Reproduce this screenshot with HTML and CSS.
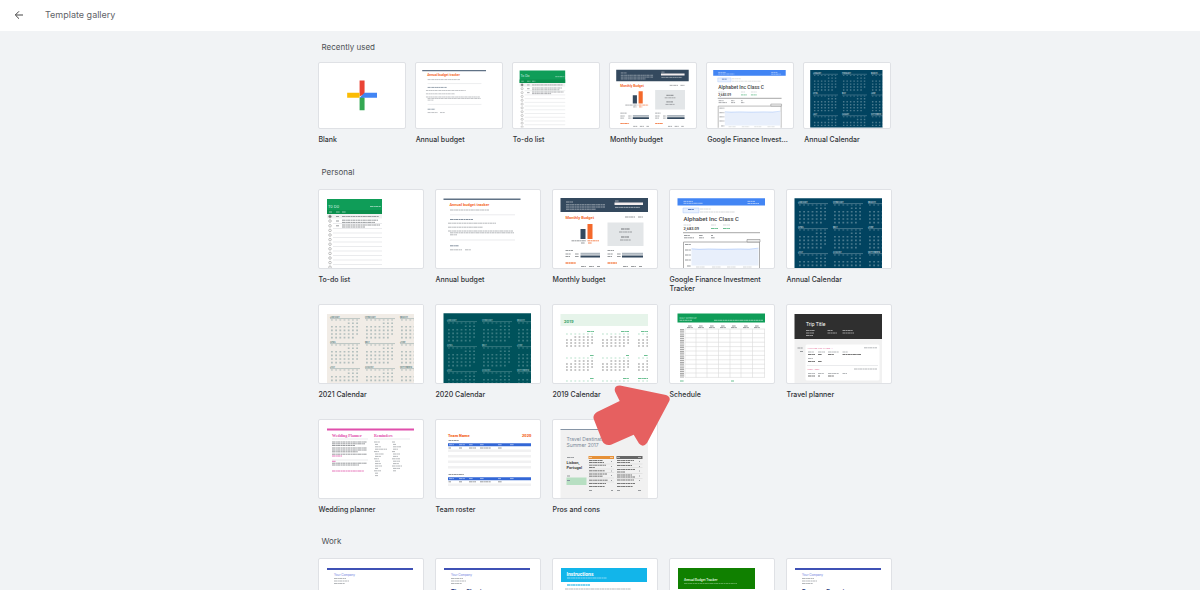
FILE: index.html
```html
<!DOCTYPE html>
<html lang="en">
<head>
<meta charset="utf-8">
<meta name="viewport" content="width=device-width, initial-scale=1">
<title>Template gallery</title>
<link rel="stylesheet" href="styles.css">
</head>
<body>
<svg class="defs" aria-hidden="true">
  <defs>
    <g id="month">
      <path class="rule" d="M0 2.6H30"/>
      <path class="day faint" d="M1 4H30"/>
      <path class="day" d="M17.8 7.2H30M1 10.8H30M1 14.4H30M1 18H30M1 21.6H26"/>
    </g>
    <g id="months">
      <use href="#month" x="12" y="12"/><use href="#month" x="47" y="12"/><use href="#month" x="82" y="12"/>
      <use href="#month" x="12" y="37"/><use href="#month" x="47" y="37"/><use href="#month" x="82" y="37"/>
      <use href="#month" x="12" y="62"/><use href="#month" x="47" y="62"/><use href="#month" x="82" y="62"/>
      <g class="names" fill="currentColor">
        <text x="12" y="14">JANUARY</text><text x="47" y="14">FEBRUARY</text><text x="82" y="14">MARCH</text>
        <text x="12" y="39">APRIL</text><text x="47" y="39">MAY</text><text x="82" y="39">JUNE</text>
        <text x="12" y="64">JULY</text><text x="47" y="64">AUGUST</text><text x="82" y="64">SEPTEMBER</text>
      </g>
      <path fill="#fff" d="M96 0H106V80H96Z"/>
    </g>
    <g id="days19">
      <path class="day green faint" d="M1 5H30"/>
      <path class="day gray" d="M9.400 8H30M1 11H30M1 14H30M1 17H26"/>
    </g>
    <g id="company">
      <path fill="#3f51b5" d="M9 10H95V12H9Z"/>
      <text class="t-company" x="16" y="18">Your Company</text>
      <path class="greek" d="M16 20.500H28M16 23H31M16 25.500H27"/>
    </g>
  </defs>

  <symbol id="todo" viewBox="1 1 104 78">
    <path fill="#0f9d58" d="M9 10H64V25H9Z"/><path fill="#0b8f4d" d="M9 21H64V25H9Z"/>
    <text class="t-todo" x="10" y="18.500">To Do</text>
    <path class="greek white" d="M52 17.500H63M11 23H14M18 23H22M24 23H28"/>
    <path fill="#f1f1f1" d="M9 25H64V29.500H9Z"/>
    <path class="greek dark" d="M24 27.500H61M18 27.500H21M18 32H21M24 31.200H60M24 33.400H57M18 36.800H21M24 36H62M24 38H47"/>
    <path class="thin" d="M15 34.500H64M15 39.500H64M15 44H64M15 48.500H64M15 53H64M15 57.500H64M15 62H64M15 66.500H64M15 71H64M15 75.500H64"/>
    <g class="ring"><circle cx="12" cy="27.500" r="1.300" fill="#777"/><circle cx="12" cy="32" r="1.300"/><circle cx="12" cy="36.800" r="1.300"/><circle cx="12" cy="41.400" r="1.300"/><circle cx="12" cy="46" r="1.300"/><circle cx="12" cy="50.600" r="1.300"/><circle cx="12" cy="55.200" r="1.300"/><circle cx="12" cy="59.800" r="1.300"/><circle cx="12" cy="64.400" r="1.300"/><circle cx="12" cy="69" r="1.300"/><circle cx="12" cy="73.600" r="1.300"/><circle cx="12" cy="78.200" r="1.300"/></g>
  </symbol>

  <symbol id="annual" viewBox="1 1 104 78">
    <path fill="#607286" d="M8.500 9.500H85.500V11H8.500Z"/>
    <text class="t-annual" x="14.500" y="17.200">Annual budget tracker</text>
    <path class="greek" d="M15 21H54"/>
    <path class="thin" d="M15 25.800H80M15 51H80"/>
    <path class="greek slate" d="M15 30.500H38M15 56.800H24"/>
    <path class="greek" d="M13 34.200H61M13 38.200H48M13 42H78M15 43.800H79M15 45.800H22M15 60.800H27M30 60.800H36"/>
  </symbol>

  <symbol id="monthly" viewBox="1 1 104 78">
    <path fill="#34495e" d="M8.500 9H96V23H8.500Z"/>
    <path fill="#f4eeee" d="M62.500 13.600H91V16H62.500Z"/>
    <path class="greek white" d="M14 13H21M14 15.800H53M14 18H53M14 20.200H44M63 12H67M63 18.400H88"/>
    <text class="t-monthly" x="13.500" y="30.400">Monthly Budget</text>
    <path class="greek dark" d="M73 28H83M86 28H91"/>
    <path fill="#34495e" d="M28.500 40H33.500V50H28.500Z"/>
    <path fill="#f4692b" d="M35.500 35H40.500V50H35.500Z"/>
    <path class="greek dark" d="M19.500 51.800H34M29 54H33"/>
    <path class="greek orange" d="M35.500 51.800H47M36 54H40"/>
    <path fill="#e3e6e8" d="M55.500 33.500H91.500V57H55.500Z"/>
    <path class="greek dark bold" d="M69 40H78M69 48H77"/><path class="greek dark" d="M67 43H80M68 51H79M13.500 61.500H21M55.500 61.500H62M13.500 65H19M23 65H27M13.500 67.500H18M23 67.500H27M55.500 65H61M65 65H69M55.500 67.500H60M65 67.500H69"/>
    <path fill="#adb6bf" d="M28.500 63.800H48V65.800H28.500ZM70 63.800H91V65.800H70Z"/>
    <path fill="#34495e" d="M28.500 66.500H48V68.500H28.500ZM70 66.500H91V68.500H70Z"/>
    <path class="greek orange bold" d="M13.500 74H24M55.500 74H65"/>
    <path class="greek dark" d="M29 77.500H34M37 77.500H42M45 77.500H48M71 77.500H76M79 77.500H84M87 77.500H90"/>
  </symbol>

  <symbol id="finance" viewBox="1 1 104 78">
    <path fill="#4285f4" d="M8.500 9.300H96V16.500H8.500Z"/>
    <path class="greek white" d="M14.500 12.400H24M14.500 14.300H34M78.500 12.400H86M78.500 14.500H90"/>
    <path fill="#e8f0fe" stroke="#a9c6fa" stroke-width=".5" d="M14 19H30V23.800H14Z"/>
    <path class="greek blue" d="M19 20.500H25"/><path class="greek pale" d="M31 20H42M31 23H66"/>
    <text class="t-alpha" x="14.500" y="31.800">Alphabet Inc Class C</text>
    <path class="greek pale" d="M14.500 36H22M42 36H47M54 36H61"/>
    <text class="t-price" x="14.500" y="41.300">2,683.09</text>
    <path class="greek green" d="M42 39.500H49M54 39.500H61"/>
    <path fill="#b8b8b8" d="M14 43H91V44.300H14Z"/>
    <path class="greek dark" d="M15 46.500H21M15 48.800H25M30 46.500H34M30 48.800H35M42 46.500H44M42 48.800H46"/>
    <path fill="#fff" stroke="#999" stroke-width=".8" d="M14.500 53H90.500V82H14.500Z"/>
    <path fill="#eee" stroke="#777" stroke-width=".5" d="M78 50.500H91V53H78Z"/>
    <path fill="#e8effb" d="M22.500 60H89.500V76.500H22.500Z"/>
    <path fill="none" stroke="#8fb5f8" stroke-width=".5" d="M22.500 59.800L30 60.300L40 60L55 60.300L70 60L80 60.200L89.500 59.200"/>
    <path class="greek dark" d="M16 55.500H22M16 61H22M16 66H22M16 71H22M18 77H22"/>
    <path class="greek pale" d="M27 78H36M43 78H52M58 78H67M74 78H83"/>
  </symbol>

  <symbol id="cal22" viewBox="1 1 104 78"><path fill="#014360" d="M8.500 9.300H96V80H8.500Z"/><use href="#months" color="#b9cad3"/></symbol>
  <symbol id="cal21" viewBox="1 1 104 78"><path fill="#f1ece6" d="M9 10H96V80H9Z"/><use href="#months" color="#587d82"/></symbol>
  <symbol id="cal20" viewBox="1 1 104 78"><path fill="#00525b" d="M8.500 9.300H96V80H8.500Z"/><use href="#months" y="3" color="#8fb9bb"/></symbol>
  <symbol id="cal19" viewBox="1 1 104 78">
    <path fill="#e6f4ea" d="M8.500 10H96V22H8.500Z"/><text class="t-year" x="12" y="18.500">2019</text>
    <use href="#days19" x="13" y="25"/><use href="#days19" x="49" y="25"/><use href="#days19" x="85" y="25"/>
    <use href="#days19" x="13" y="49"/><use href="#days19" x="49" y="49"/><use href="#days19" x="85" y="49"/>
    <use href="#days19" x="13" y="72"/><use href="#days19" x="49" y="72"/><use href="#days19" x="85" y="72"/>
    <path class="greek green" d="M35 27.500H42M69 27.500H77M89 27.500H96M38 51.500H42M74 51.500H77M92 51.500H96M38 74.500H42M71 74.500H77M86 74.500H96"/>
    <path fill="#fff" d="M96 0H106V80H96Z"/>
  </symbol>

  <symbol id="schedule" viewBox="1 1 104 78">
    <path fill="#0f9d58" d="M8.500 9.500H96V18.500H8.500Z"/>
    <text class="t-sched" x="10.500" y="14.500">DAILY SCHEDULE</text>
    <path class="greek white" d="M10.500 16.300H23M45 16.300H94"/>
    <path class="greek dark" d="M19 22H23M30 22H34M41 22H45M52 22H56M63 22H67M75 22H79M86 22H90M18 23.600H24M29 23.600H35M40 23.600H46M51 23.600H57M62 23.600H68M74 23.600H80M85 23.600H91"/>
    <path class="times" d="M13 25V74"/>
    <path class="table" d="M16 25H96M16 29.400H96M16 33.800H96M16 38.200H96M16 42.600H96M16 47H96M16 51.400H96M16 55.800H96M16 60.200H96M16 64.600H96M16 69H96M16 73.400H96M16 25V73.400M27 25V73.400M38 25V73.400M49.500 25V73.400M61 25V73.400M72 25V73.400M83.500 25V73.400M95.500 25V73.400"/>
    <path class="greek green" d="M11 77H15M62 77H65"/>
  </symbol>

  <symbol id="travel" viewBox="1 1 104 78">
    <path fill="#2f2f2f" d="M8.500 10H96V35H8.500Z"/><path fill="#f1f1f1" d="M8.500 35H96V80H8.500Z"/>
    <text class="t-trip" x="20" y="22">Trip Title</text>
    <path class="greek white" d="M20 26.500H29M20 29H28M20 31.500H27M41.500 26.500H47M41.500 29H51M56.500 26.500H67M56.500 29H68"/>
    <path class="greek dark" d="M11.500 44H17M14 47.500H17"/>
    <rect x="19.500" y="40.500" width="74" height="36" rx="1.500" fill="#fff"/>
    <text class="t-flight" x="21.500" y="44.600">Arriving Las Flight 1</text><text class="t-flight" x="21.500" y="66">Hotel Stay</text>
    <path class="thin" d="M21 61.500H92"/>
    <path class="greek" d="M78 43.800H91M68 65H91M22 48H28M32 48H39M42 48H53M56.500 48H62M22 54.500H27M22 69.500H29M32 69.500H38M42 69.500H53M56.500 69.500H61"/>
    <path class="greek black" d="M22 50.500H29M32 50.500H36M42 50.500H48M56.500 50.500H75M22 57.500H29M32 57.500H36M22 72H29M32 72H34M42 72H48"/>
  </symbol>

  <symbol id="wedding" viewBox="1 1 104 78">
    <path fill="#e04fac" d="M9 9.500H96V11.500H9Z"/>
    <text class="t-wed" x="14" y="17.500">Wedding Planner</text><text class="t-wed" x="56" y="17.500">Reminders</text>
    <path class="thin" d="M14 20H50M56 20H92M14 41H50"/>
    <path class="greek dark" d="M14 23H49M14 24.800H47M14 26.500H37M14 29H49M14 31H49M14 32.800H40M14 35.200H49M14 44.200H49M14 46H41"/>
    <path class="greek pink" d="M14 37H24M14 42.300H18M14 52H46"/>
    <path class="greek" d="M56 23H62M57 25.400H60M57 27.800H63M57 30.200H69M56 32.600H61M57 35H66M57 37.400H63M56 39.800H61M57 42.200H62M57 44.600H63M57 47H64M57 49.400H60M56 51.800H63M57 54.200H60M57 56.600H60M74 23H77M75 25.400H78M75 27.800H83M75 30.200H80M74 32.600H77M75 35H82M75 37.400H80M74 39.800H82M75 42.200H82M75 44.600H81M74 47H84M75 49.400H82M75 51.800H78"/>
  </symbol>

  <symbol id="roster" viewBox="1 1 104 78">
    <text class="t-team" x="13" y="18">Team Name</text><text class="t-team" x="87" y="18">2020</text>
    <path class="greek dark" d="M13.500 21.500H24M13.500 55.500H29M13.500 29H16M24 29H27M34 29H41M45 29H56M63 29H67M13.500 62.800H16M24 62.800H27M34 62.800H41M45 62.800H56M63 62.800H67"/>
    <path fill="#3367d6" d="M13 24.300H96V27.300H13ZM13 58.200H96V61.200H13Z"/>
    <path class="greek white" d="M14 25.700H19M24 25.700H30M34 25.700H38M45 25.700H49M63 25.700H67M75 25.700H79M14 59.600H19M24 59.600H30M34 59.600H38M45 59.600H49M63 59.600H66M75 59.600H79"/>
    <path fill="#f1f1f2" d="M13 30.500H96V33H13ZM13 36H96V38.500H13ZM13 41.500H96V44H13ZM13 47H96V49.500H13ZM13 64.500H96V67H13Z"/>
  </symbol>

  <symbol id="pros" viewBox="1 1 104 78">
    <path fill="#f1f1f1" d="M8.500 10H96V80H8.500Z"/><path fill="#8695a6" d="M8.500 10H96V11H8.500Z"/>
    <text class="t-travel" x="14.500" y="21.800">Travel Destination</text><text class="t-travel" x="14.500" y="28">Summer 2017</text>
    <path class="greek dark" d="M15 38.500H22M15 57H18"/>
    <text class="t-lisbon" x="14.500" y="44.500">Lisbon,</text><text class="t-lisbon" x="14.500" y="50">Portugal</text>
    <path fill="#b7dfc2" d="M14.500 58.500H34.500V66H14.500Z"/><path class="greek slate" d="M15 61.500H18"/>
    <path fill="#e69138" d="M36.500 37H62V40H36.500Z"/><path fill="#666" d="M64.500 37H90.500V40H64.500Z"/>
    <path class="greek white" d="M37 38.500H40M58 38.500H61M65 38.500H68M86 38.500H89"/>
    <path class="greek black" d="M37 41.500H51M37 43.500H52M37 46.200H54M37 48.500H43M37 51.800H53M37 55H55M37 57.200H51M37 61.200H56M37 64.500H54M37 67.500H53M65 41.500H82M65 43.500H78M65 46.500H80M65 50.500H83M65 53H73M65 56H80M65 58H83M65 61H82M65 64.500H83M65 67.500H81"/>
    <path class="table" d="M36.500 45H62M36.500 50H62M36.500 53.500H62M36.500 59H62M36.500 63H62M64.500 45H90.500M64.500 48.500H90.500M64.500 54.500H90.500M64.500 59.500H90.500"/>
    <path class="greek dark" d="M37 71.500H40M59 71.500H61M65 71.500H68M86 71.500H89M59 42.500H60M59 47.500H60M59 52H60M59 56.500H60M59 61.500H60M87 42.500H88M87 47.500H88M87 52H88M87 57H88M87 61.500H88"/>
  </symbol>

  <symbol id="invoice" viewBox="1 1 104 78"><use href="#company"/><text class="t-sheet" x="16" y="42">Invoice</text></symbol>
  <symbol id="timesheet" viewBox="1 1 104 78"><use href="#company"/><text class="t-sheet" x="16" y="34.500">Time Sheet</text></symbol>
  <symbol id="expense" viewBox="1 1 104 78"><use href="#company"/><text class="t-sheet" x="16" y="34.500">Expense Report</text></symbol>
  <symbol id="instructions" viewBox="1 1 104 78">
    <path fill="#12b5ea" d="M9 10H95V24H9Z"/><text class="t-instr" x="14.500" y="17.500">Instructions</text>
    <path class="greek white" d="M15 20H55"/><path class="greek cyan bold" d="M15 27H38"/><path class="greek" d="M13 31H79M15 34H70"/>
  </symbol>
  <symbol id="tracker" viewBox="1 1 104 78">
    <path fill="#108000" d="M9 10H86V31H9Z"/><text class="t-track" x="15" y="22.500">Annual Budget Tracker</text><path class="greek lime" d="M15 25.500H68"/>
  </symbol>
</svg>

<header class="topbar">
  <button class="back" type="button" aria-label="Back">
    <svg viewBox="0 0 10 10"><path d="M9 5H1.500M5 1.300L1.300 5L5 8.700"/></svg>
  </button>
  <h1 class="title">Template gallery</h1>
</header>

<main class="gallery">
  <section class="section recent">
    <h2 class="heading">Recently used</h2>
    <ul class="cards">
      <li class="item"><a class="link" href="#"><span class="card"><svg viewBox="0 0 104 78"><path fill="#ea4335" d="M49 21H55V38L49 40Z"/><path fill="#fbbc04" d="M34 36H49V42H34Z"/><path fill="#34a853" d="M49 42L52 40L55 42V57H49Z"/><path fill="#4285f4" d="M55 36H70V42H52L49 42Z"/></svg></span><span class="label">Blank</span></a></li>
      <li class="item"><a class="link" href="#"><span class="card"><svg viewBox="0 0 104 78"><use href="#annual"/></svg></span><span class="label">Annual budget</span></a></li>
      <li class="item"><a class="link" href="#"><span class="card"><svg viewBox="0 0 104 78"><use href="#todo"/></svg></span><span class="label">To-do list</span></a></li>
      <li class="item"><a class="link" href="#"><span class="card"><svg viewBox="0 0 104 78"><use href="#monthly"/></svg></span><span class="label">Monthly budget</span></a></li>
      <li class="item"><a class="link" href="#"><span class="card"><svg viewBox="0 0 104 78"><use href="#finance"/></svg></span><span class="label">Google Finance Investment Tracker</span></a></li>
      <li class="item"><a class="link" href="#"><span class="card"><svg viewBox="0 0 104 78"><use href="#cal22"/></svg></span><span class="label">Annual Calendar</span></a></li>
    </ul>
  </section>

  <section class="section">
    <h2 class="heading">Personal</h2>
    <ul class="cards">
      <li class="item"><a class="link" href="#"><span class="card"><svg viewBox="0 0 104 78"><use href="#todo"/></svg></span><span class="label">To-do list</span></a></li>
      <li class="item"><a class="link" href="#"><span class="card"><svg viewBox="0 0 104 78"><use href="#annual"/></svg></span><span class="label">Annual budget</span></a></li>
      <li class="item"><a class="link" href="#"><span class="card"><svg viewBox="0 0 104 78"><use href="#monthly"/></svg></span><span class="label">Monthly budget</span></a></li>
      <li class="item"><a class="link" href="#"><span class="card"><svg viewBox="0 0 104 78"><use href="#finance"/></svg></span><span class="label">Google Finance Investment Tracker</span></a></li>
      <li class="item"><a class="link" href="#"><span class="card"><svg viewBox="0 0 104 78"><use href="#cal22"/></svg></span><span class="label">Annual Calendar</span></a></li>
      <li class="item"><a class="link" href="#"><span class="card"><svg viewBox="0 0 104 78"><use href="#cal21"/></svg></span><span class="label">2021 Calendar</span></a></li>
      <li class="item"><a class="link" href="#"><span class="card"><svg viewBox="0 0 104 78"><use href="#cal20"/></svg></span><span class="label">2020 Calendar</span></a></li>
      <li class="item"><a class="link" href="#"><span class="card"><svg viewBox="0 0 104 78"><use href="#cal19"/></svg></span><span class="label">2019 Calendar</span></a></li>
      <li class="item"><a class="link" href="#"><span class="card"><svg viewBox="0 0 104 78"><use href="#schedule"/></svg></span><span class="label">Schedule</span></a>
        <svg class="pointer" viewBox="0 0 78 62" aria-hidden="true"><path fill="#e66060" d="M26.700 16L22 6.500Q20.500 .5 27 .5L73 10Q78 12 76.300 16L54 58Q50 63 46 58.500L40.700 49.700L18 59.700Q12 61 9.500 56.500L.7 34Q-.5 30 4 27Z"/></svg>
      </li>
      <li class="item"><a class="link" href="#"><span class="card"><svg viewBox="0 0 104 78"><use href="#travel"/></svg></span><span class="label">Travel planner</span></a></li>
      <li class="item"><a class="link" href="#"><span class="card"><svg viewBox="0 0 104 78"><use href="#wedding"/></svg></span><span class="label">Wedding planner</span></a></li>
      <li class="item"><a class="link" href="#"><span class="card"><svg viewBox="0 0 104 78"><use href="#roster"/></svg></span><span class="label">Team roster</span></a></li>
      <li class="item"><a class="link" href="#"><span class="card"><svg viewBox="0 0 104 78"><use href="#pros"/></svg></span><span class="label">Pros and cons</span></a></li>
    </ul>
  </section>

  <section class="section">
    <h2 class="heading">Work</h2>
    <ul class="cards">
      <li class="item"><a class="link" href="#" aria-label="Invoice"><span class="card"><svg viewBox="0 0 104 78"><use href="#invoice"/></svg></span></a></li>
      <li class="item"><a class="link" href="#" aria-label="Time sheet"><span class="card"><svg viewBox="0 0 104 78"><use href="#timesheet"/></svg></span></a></li>
      <li class="item"><a class="link" href="#" aria-label="Instructions"><span class="card"><svg viewBox="0 0 104 78"><use href="#instructions"/></svg></span></a></li>
      <li class="item"><a class="link" href="#" aria-label="Annual budget tracker"><span class="card"><svg viewBox="0 0 104 78"><use href="#tracker"/></svg></span></a></li>
      <li class="item"><a class="link" href="#" aria-label="Expense report"><span class="card"><svg viewBox="0 0 104 78"><use href="#expense"/></svg></span></a></li>
    </ul>
  </section>
</main>
</body>
</html>
```

FILE: styles.css
```css
* { box-sizing: border-box; }

body {
  display: flex;
  flex-direction: column;
  height: 100vh;
  margin: 0;
  overflow: hidden;
  background: #f1f3f5;
  color: #3c4043;
  font-family: Inter, Roboto, sans-serif;
}

.defs { display: none; }

.topbar {
  display: flex;
  flex: none;
  align-items: center;
  gap: 17px;
  height: 31px;
  padding: 0 10px 1px;
  background: #fff;
}

.back {
  display: flex;
  align-items: center;
  justify-content: center;
  width: 18px;
  height: 18px;
  padding: 0;
  border: 0;
  background: none;
}

.back svg { width: 10px; height: 10px; fill: none; stroke: #444; stroke-width: 1; }

.title { margin: 0; color: #5f6368; font-size: 9px; font-weight: 400; line-height: 12px; }

.gallery {
  flex: 1;
  width: 100%;
  max-width: 583px;
  min-height: 0;
  margin: 0 auto;
  padding: 10px 0 0 9px;
}

.heading {
  margin: 0;
  padding: 0 4px 11px;
  color: #4c5054;
  font-size: 8px;
  font-weight: 400;
  line-height: 12px;
}

.cards {
  display: grid;
  grid-template-columns: repeat(5, minmax(0, 1fr));
  gap: 11px;
  margin: 0;
  padding: 0 0 12px;
  list-style: none;
}

.recent .heading { padding-bottom: 9px; }
.recent .cards { grid-template-columns: repeat(6, minmax(0, 1fr)); gap: 9px; padding-bottom: 22px; }
.item { position: relative; }
.link { display: block; color: inherit; text-decoration: none; }

.card {
  display: block;
  overflow: hidden;
  border: 1px solid #dfe1e5;
  border-radius: 2px;
  background: #fff;
}

.card svg { display: block; width: 100%; height: auto; }

.label {
  display: block;
  min-height: 18px;
  margin-top: 6px;
  padding: 0 1px;
  color: #2f3235;
  font-size: 7px;
  font-weight: 500;
  line-height: 9px;
}

.recent .label {
  min-height: 9px;
  overflow: hidden;
  text-overflow: ellipsis;
  white-space: nowrap;
}

.pointer {
  position: absolute;
  top: 81px;
  left: -76px;
  z-index: 1;
  width: 78px;
  height: 62px;
  pointer-events: none;
}

/* Thumbnail drawing */
.greek { fill: none; stroke: #b5b8bb; stroke-width: 1; stroke-dasharray: 3 .4 1.5 .3; }
.greek.bold { stroke-width: 1.4; }
.greek.dark { stroke: #999c9f; }
.greek.black { stroke: #777; }
.greek.white { stroke: #fff; stroke-opacity: .5; }
.greek.pale { stroke: #d5d8da; }
.greek.slate { stroke: #8592a0; }
.greek.orange { stroke: #f58a5a; }
.greek.green { stroke: #6bc092; }
.greek.blue { stroke: #5c7fc0; }
.greek.pink { stroke: #e678bb; }
.greek.cyan { stroke: #4fc6ee; }
.greek.lime { stroke: #58a84d; }
.thin { fill: none; stroke: #dcdee0; stroke-width: .6; }
.ring { fill: none; stroke: #999; stroke-width: .6; }
.table { fill: none; stroke: #dadada; stroke-width: .6; }
.times { fill: none; stroke: #aaa; stroke-width: 4; stroke-dasharray: 1.4 .8; }
.rule { fill: none; stroke: currentColor; stroke-width: .6; stroke-opacity: .6; }
.day { fill: none; stroke: currentColor; stroke-width: 1.6; stroke-opacity: .4; stroke-dasharray: 1.8 2.4; }
.day.faint { stroke-width: 1; }
.day.green { stroke: #4db37c; }
.day.gray { stroke: #777; stroke-opacity: .55; }
.names { font-size: 2px; font-weight: 700; }

.t-todo { fill: #d5f0e0; font-size: 4px; }
.t-annual { fill: #f4692b; font-size: 4px; font-weight: 700; font-family: Roboto, sans-serif; }
.t-monthly { fill: #f4692b; font-size: 4px; font-weight: 700; font-family: Roboto, sans-serif; }
.t-alpha { fill: #444; font-size: 6px; font-weight: 500; font-family: Roboto, sans-serif; }
.t-price { fill: #333; font-size: 4px; font-weight: 500; font-family: Roboto, sans-serif; }
.t-year { fill: #34a067; font-size: 4px; font-weight: 700; }
.t-sched { fill: #b9e4cd; font-size: 2px; }
.t-trip { fill: #fff; font-size: 5px; font-family: Roboto, sans-serif; }
.t-flight { fill: #e0447c; font-size: 2px; font-family: "Liberation Mono", monospace; }
.t-wed { fill: #e04fac; font-size: 4px; font-family: "Liberation Serif", serif; font-weight: 700; }
.t-team { fill: #f4692b; font-size: 4px; font-weight: 900; font-family: Roboto, sans-serif; }
.t-travel { fill: #7c8a99; font-size: 5px; }
.t-lisbon { fill: #444; font-size: 4px; font-weight: 700; font-family: Roboto, sans-serif; }
.t-company { fill: #6c7be0; font-size: 3px; }
.t-sheet { fill: #283a80; font-size: 6px; font-weight: 700; font-family: Roboto, sans-serif; }
.t-instr { fill: #fff; font-size: 5px; font-weight: 700; font-family: Roboto, sans-serif; }
.t-track { fill: #dff0dc; font-size: 3px; font-weight: 700; }
```
